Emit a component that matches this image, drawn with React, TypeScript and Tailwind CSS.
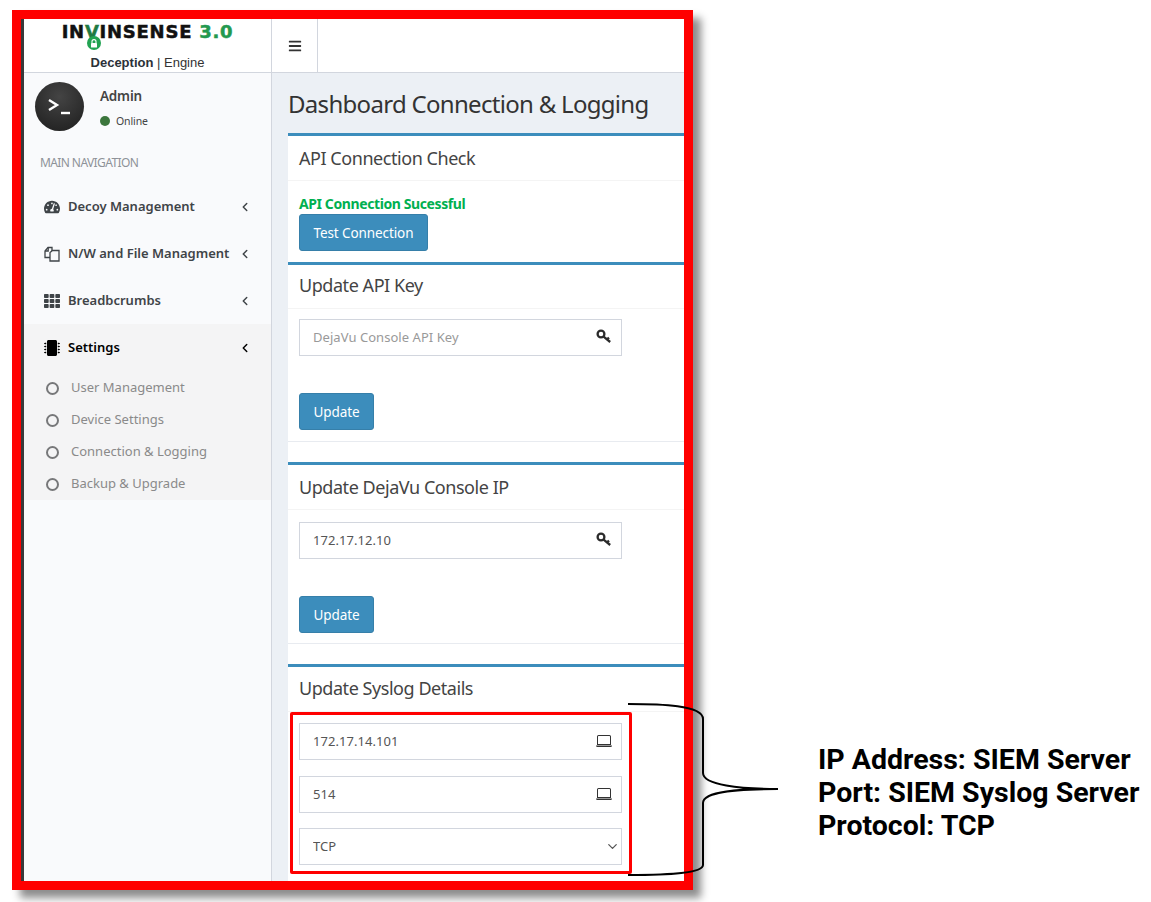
import { BsLaptop } from 'react-icons/bs';
import { FaBars, FaMicrochip, FaTachometerAlt, FaTh } from 'react-icons/fa';
import { LuChevronDown, LuChevronLeft } from 'react-icons/lu';
import type { ReactNode } from 'react';

function NavItem({ icon, label, active = false }: { icon: ReactNode; label: string; active?: boolean }) {
  return (
    <div className={`flex h-[47px] items-center pl-[20px] pr-[19px] ${active ? 'text-black' : 'text-[#3f4448]'}`}>
      <span className="flex w-[24px] text-[16px]">{icon}</span>
      <span className="flex-1 whitespace-nowrap text-[13px] font-semibold">{label}</span>
      <LuChevronLeft className="text-[14px]" strokeWidth={2.5} />
    </div>
  );
}

function SubItem({ label }: { label: string }) {
  return (
    <div className="flex h-[32px] items-center pl-[22px] text-[#8a8a8a]">
      <span className="mr-[12px] h-[13px] w-[13px] rounded-full border-2 border-[#77787a]" />
      <span className="text-[13px]">{label}</span>
    </div>
  );
}

function Field({ value, placeholder, icon }: { value?: string; placeholder?: string; icon: ReactNode }) {
  return (
    <div className="relative h-[37px] w-[323px]">
      <input
        readOnly
        value={value ?? ''}
        placeholder={placeholder}
        className="h-full w-full border border-[#d2d6de] bg-white pb-[2px] pl-[13px] text-[13px] tracking-[0.05px] text-[#555] outline-none placeholder:text-[#999]"
      />
      <span className="absolute right-[10px] top-[10px] flex text-[#333]">{icon}</span>
    </div>
  );
}

function Card({ title, children, headerClass = 'h-[45px]', footer = true }: { title: string; children: ReactNode; headerClass?: string; footer?: boolean }) {
  return (
    <section className={`w-[420px] border-t-[3px] border-[#3c8dbc] bg-white ${footer ? 'border-b border-b-[#e8ebf0]' : ''}`}>
      <h3 className={`flex items-center border-b border-[#f4f4f4] pl-[11px] text-[18px] tracking-[-0.45px] text-[#444] ${headerClass}`}>
        {title}
      </h3>
      {children}
    </section>
  );
}

function PrimaryButton({ children }: { children: ReactNode }) {
  return (
    <button className="h-[37px] rounded-[3px] border border-[#367fa9] bg-[#3c8dbc] px-[13.5px] pt-[1px] text-[13.5px] tracking-[-0.1px] text-white">
      {children}
    </button>
  );
}

function KeyIcon() {
  return (
    <svg width="16" height="15" viewBox="0 0 16 15" fill="none" stroke="#2b2b2b" strokeWidth="2.3">
      <circle cx="5" cy="5" r="3.4" />
      <path d="M7.6 7.6l6.6 5.4M11 10.4l2-1.8" />
    </svg>
  );
}

function FilesIcon() {
  return (
    <svg width="16" height="16" viewBox="0 0 16 16" fill="none" stroke="currentColor" strokeWidth="1.3">
      <path d="M6 11.5H1V5l3-3.5h4V5" />
      <path d="M4.2 1.5V5H1" />
      <path d="M6 15V6.5L8.5 4.5H15V15z" />
    </svg>
  );
}

const LaptopIcon = <BsLaptop className="text-[16px]" />;

export default function App() {
  return (
    <div className="relative h-[902px] w-[1151px] overflow-hidden bg-white">
      <div className="flex pl-[12px] pt-[10px]">
        {/* Captured window */}
        <div className="flex h-[880px] w-[681px] shrink-0 flex-col overflow-hidden border-[9px] border-[#ff0000] bg-white font-['Noto_Sans',sans-serif] shadow-[8px_8px_8px_rgba(0,0,0,0.45)]">
          <div className="flex min-h-0 flex-1 flex-col border-l-[3px] border-[#3a3a3a]">
            <header className="flex h-[54px] shrink-0 border-b border-[#d2d6de] bg-white">
              <div className="flex w-[248px] shrink-0 flex-col items-center border-r border-[#d2d6de] pt-[2px]">
                <div className="relative flex h-[22px] items-center whitespace-nowrap font-['DejaVu_Sans',sans-serif] text-[18px] font-bold leading-none tracking-[0.75px] text-[#111] [-webkit-text-stroke:0.5px_currentColor]">
                  <span>IN</span>
                  <span className="relative">
                    <span className="text-[#1f7a43]">V</span>
                    <span className="absolute left-[2px] top-[13px] flex h-[14px] w-[14px] items-center justify-center rounded-full bg-[#22a352]">
                      <svg width="8" height="9" viewBox="0 0 8 9" fill="none">
                        <path d="M2 4V2.6a2 2 0 0 1 4 0V4" stroke="#fff" strokeWidth="1.1" />
                        <rect x="1" y="4" width="6" height="4.6" rx="0.6" fill="#fff" />
                      </svg>
                    </span>
                  </span>
                  <span>INSENSE</span>
                  <span className="ml-[7px] text-[#23994f]">3.0</span>
                </div>
                <div className="mt-[13px] font-['Liberation_Sans',sans-serif] text-[13px] leading-none text-[#333]">
                  <span className="font-bold text-[#2c3138]">Deception</span> | Engine
                </div>
              </div>
              <div className="flex w-[46px] items-center justify-center border-r border-[#d2d6de]">
                <FaBars className="text-[14px] text-[#333]" />
              </div>
            </header>

            <div className="flex min-h-0 flex-1">
              <aside className="w-[248px] shrink-0 border-r border-[#d2d6de] bg-[#f9fafc]">
                <div className="flex h-[78px] pl-[11px] pt-[9px]">
                  <div className="flex h-[49px] w-[49px] items-center justify-center rounded-full bg-[radial-gradient(circle_at_50%_30%,#444,#1d1d1d)]">
                    <svg width="26" height="20" viewBox="0 0 26 20" fill="none" stroke="#fff" strokeWidth="2.4">
                      <path d="M2 3l8 5-8 5" />
                      <path d="M14 16h9" />
                    </svg>
                  </div>
                  <div className="ml-[16px] pt-[6px]">
                    <div className="text-[13.5px] font-semibold leading-[17px] tracking-[-0.2px] text-[#444]">Admin</div>
                    <div className="mt-[11px] flex items-center text-[10.5px] leading-none tracking-[-0.1px] text-[#444]">
                      <span className="mr-[6px] h-[10px] w-[10px] rounded-full bg-[#3c763d]" />
                      Online
                    </div>
                  </div>
                </div>
                <div className="h-[32px] pl-[16px] pt-[4px] text-[12px] leading-[16px] tracking-[-0.6px] text-[#8e9298]">
                  MAIN NAVIGATION
                </div>
                <NavItem icon={<FaTachometerAlt />} label="Decoy Management" />
                <NavItem icon={<FilesIcon />} label="N/W and File Managment" />
                <NavItem icon={<FaTh />} label="Breadbcrumbs" />
                <div className="h-[176px] bg-[#f4f4f5]">
                  <NavItem icon={<FaMicrochip className="text-black" />} label="Settings" active />
                  <div className="pt-[1px]">
                    <SubItem label="User Management" />
                    <SubItem label="Device Settings" />
                    <SubItem label="Connection & Logging" />
                    <SubItem label="Backup & Upgrade" />
                  </div>
                </div>
              </aside>

              <main className="flex min-w-0 flex-1 flex-col overflow-hidden bg-[#ecf0f5] pl-[16px]">
                <h1 className="flex h-[60px] shrink-0 items-center whitespace-nowrap pt-[1px] text-[24px] tracking-[-0.7px] text-[#333]">
                  Dashboard Connection &amp; Logging
                </h1>
                <div className="flex-1 bg-white">
                  <Card title="API Connection Check" footer={false}>
                    <div className="h-[81px] pl-[11px] pt-[12px]">
                      <div className="text-[14px] font-bold leading-[21px] tracking-[-0.4px] text-[#00b050]">
                        API Connection Sucessful
                      </div>
                      <PrimaryButton>Test Connection</PrimaryButton>
                    </div>
                  </Card>
                  <Card title="Update API Key" headerClass="h-[44px] pb-[2px]">
                    <div className="pb-[11px] pl-[11px] pt-[10px]">
                      <Field placeholder="DejaVu Console API Key" icon={<KeyIcon />} />
                      <div className="mt-[37px]">
                        <PrimaryButton>Update</PrimaryButton>
                      </div>
                    </div>
                  </Card>
                  <div className="h-[20px]" />
                  <Card title="Update DejaVu Console IP">
                    <div className="pb-[10px] pl-[11px] pt-[12px]">
                      <Field value="172.17.12.10" icon={<KeyIcon />} />
                      <div className="mt-[37px]">
                        <PrimaryButton>Update</PrimaryButton>
                      </div>
                    </div>
                  </Card>
                  <div className="h-[20px]" />
                  <Card title="Update Syslog Details" headerClass="h-[45px] pb-[2px]" footer={false}>
                    <div className="flex flex-col pl-[11px] pt-[11px]">
                      <Field value="172.17.14.101" icon={LaptopIcon} />
                      <div className="mt-[16px]">
                        <Field value="514" icon={LaptopIcon} />
                      </div>
                      <div className="relative mt-[15px] h-[37px] w-[323px]">
                        <select className="h-full w-full appearance-none border border-[#d2d6de] bg-white pl-[13px] text-[13px] text-[#555] outline-none">
                          <option>TCP</option>
                        </select>
                        <LuChevronDown className="absolute right-[2px] top-[11px] text-[15px] text-[#555]" />
                      </div>
                    </div>
                  </Card>
                </div>
              </main>
            </div>
          </div>
        </div>

        {/* Callout */}
        <div className="ml-[125px] mt-[733px] whitespace-nowrap font-['Roboto',sans-serif] text-[28.5px] font-bold leading-[33px] text-black">
          <div>IP Address: SIEM Server</div>
          <div>Port: SIEM Syslog Server</div>
          <div>Protocol: TCP</div>
        </div>
      </div>

      {/* Highlight box over the syslog fields */}
      <div className="absolute left-[290px] top-[712px] h-[162px] w-[342px] rounded-[2px] border-[3px] border-[#ff0000]" />

      {/* Brace */}
      <svg className="absolute left-[620px] top-[695px]" width="170" height="190" viewBox="0 0 170 190" fill="none" stroke="#000" strokeWidth="2">
        <path d="M8 9C40 9 83 10 83 24V78C83 90 120 94 158 94C120 94 83 96 83 108V170C83 178 50 180 8 180" />
      </svg>
    </div>
  );
}
